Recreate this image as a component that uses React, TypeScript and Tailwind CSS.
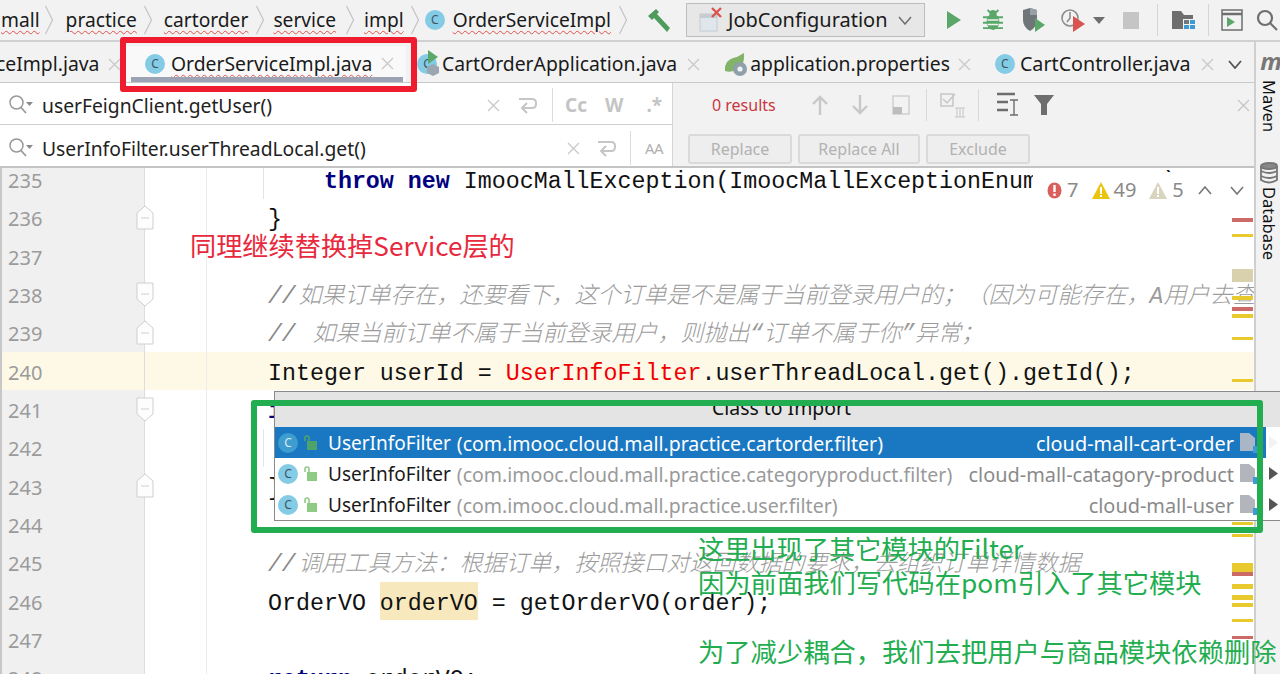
import React from "react";

const UI = "font-['Noto_Sans','Noto_Sans_CJK_SC',sans-serif]";

function Chevron({ className = "" }: { className?: string }) {
  return (
    <svg width="10" height="32" viewBox="0 0 10 32" className={`shrink-0 ${className}`} fill="none" stroke="#c4c4c4" strokeWidth="1.2">
      <path d="M1.5 2 L8.5 16 L1.5 30" />
    </svg>
  );
}

function ClassIcon({ dark = false, size = 20 }: { dark?: boolean; size?: number }) {
  return (
    <span
      className={`flex shrink-0 items-center justify-center rounded-full text-[12px] leading-none ${UI} ${dark ? "bg-[#3f9ccf] text-[#d8eaf5]" : "bg-[#84cbe6] text-[#3e5560]"}`}
      style={{ width: size, height: size }}
    >
      C
    </span>
  );
}

function CloseX({ className = "", color = "#c9c9c9", size = 13 }: { className?: string; color?: string; size?: number }) {
  return (
    <svg width={size} height={size} viewBox="0 0 13 13" className={`shrink-0 ${className}`} fill="none" stroke={color} strokeWidth="1.3">
      <path d="M1 1 L12 12 M12 1 L1 12" />
    </svg>
  );
}

function SearchIcon() {
  return (
    <svg width="26" height="22" viewBox="0 0 26 22" className="shrink-0" fill="none">
      <circle cx="8.5" cy="8.5" r="6.5" stroke="#9a9a9a" strokeWidth="1.5" />
      <path d="M13 13.5 L18 19" stroke="#9a9a9a" strokeWidth="1.8" />
      <path d="M18 8 L25 8 L21.5 12 Z" fill="#8a8a8a" />
    </svg>
  );
}

function EnterIcon({ className = "" }: { className?: string }) {
  return (
    <svg width="19" height="18" viewBox="0 0 19 18" className={`shrink-0 ${className}`} fill="none" stroke="#c6c6c6" strokeWidth="2">
      <path d="M1 3 H14 Q18 3 18 7 V8 Q18 12 14 12 H5" />
      <path d="M9 7 L4 12 L9 17" />
    </svg>
  );
}

function Folder({ light = false }: { light?: boolean }) {
  return (
    <svg width="18" height="22" viewBox="0 0 18 22" className="shrink-0">
      <path d="M0 1 H9 L15 6 V19 H0 Z" fill={light ? "#a9b6c6" : "#b2b6bc"} />
      <rect x="13" y="14" width="5" height="7" fill="#3d9ad6" />
    </svg>
  );
}

function Lock({ dark = false }: { dark?: boolean }) {
  const c = dark ? "#4fa36a" : "#8fcb85";
  return (
    <svg width="13" height="15" viewBox="0 0 13 15" className="shrink-0">
      <rect x="3" y="6" width="10" height="9" fill={c} />
      <path d="M1 6 V3 Q1 1 3 1 Q5 1 5 3 V6" fill="none" stroke={c} strokeWidth="1.6" />
    </svg>
  );
}

function SmallButton({ w, children }: { w: string; children: React.ReactNode }) {
  return (
    <span className={`flex h-[30px] items-center justify-center rounded-[3px] border-2 border-[#dadada] bg-[#eeeeee] text-[16px] text-[#b2b2b2] ${w}`}>
      {children}
    </span>
  );
}

const Kw = ({ children }: { children: React.ReactNode }) => <span className="font-bold text-[#000080]">{children}</span>;
const Cm = ({ children }: { children: React.ReactNode }) => (
  <span className="italic text-[#9c9c9c] font-['Liberation_Mono','Noto_Sans_CJK_SC',monospace] text-[23px] font-light [text-spacing-trim:space-all]">
    <span className="mr-[3px] text-[#888]">//</span>
    {children}
  </span>
);

type Row = { n: number; code?: React.ReactNode; fold?: "up" | "down"; current?: boolean; guide?: boolean };

const rows: Row[] = [
  {
    n: 235,
    guide: true,
    code: (
      <>
        {"    "}
        <Kw>throw</Kw> <Kw>new</Kw> ImoocMallException(ImoocMallExceptionEnum.<span className="italic font-bold text-[#660e7a]">NO_ORDER</span>);
      </>
    ),
  },
  { n: 236, fold: "up", code: "}" },
  { n: 237 },
  { n: 238, fold: "down", code: <Cm>如果订单存在，还要看下，这个订单是不是属于当前登录用户的；（因为可能存在，A用户去查</Cm> },
  { n: 239, fold: "up", code: <Cm> 如果当前订单不属于当前登录用户，则抛出“订单不属于你”异常；</Cm> },
  {
    n: 240,
    current: true,
    code: (
      <>
        Integer userId = <span className="text-[#f00000]">UserInfoFilter</span>.userThreadLocal.get().getId();
      </>
    ),
  },
  { n: 241, fold: "down", code: <Kw>if</Kw> },
  { n: 242, guide: true },
  { n: 243, fold: "up", code: "}" },
  { n: 244 },
  { n: 245, code: <Cm>调用工具方法：根据订单，按照接口对返回数据的要求，去组织订单详情数据</Cm> },
  {
    n: 246,
    code: (
      <>
        OrderVO <span className="bg-[#f7e9bd] pb-[3px] pt-[9px]">orderVO</span> = getOrderVO(order);
      </>
    ),
  },
  { n: 247 },
  {
    n: 248,
    code: (
      <>
        <Kw>return</Kw> orderVO;
      </>
    ),
  },
];

const marks: { top: number; h: number; c: string }[] = [
  { top: 218, h: 4, c: "#cb6a66" },
  { top: 234, h: 3, c: "#e8c92e" },
  { top: 269, h: 13, c: "#d9d0ae" },
  { top: 296, h: 4, c: "#e8c92e" },
  { top: 307, h: 4, c: "#cb6a66" },
  { top: 314, h: 4, c: "#e8c92e" },
  { top: 337, h: 3, c: "#e8c92e" },
  { top: 379, h: 3, c: "#e8c92e" },
  { top: 522, h: 3, c: "#e8c92e" },
  { top: 534, h: 3, c: "#e8c92e" },
  { top: 563, h: 9, c: "#e8c92e" },
  { top: 572, h: 4, c: "#cb6a66" },
  { top: 584, h: 5, c: "#e8c92e" },
  { top: 595, h: 5, c: "#e8c92e" },
  { top: 603, h: 4, c: "#e8c92e" },
  { top: 619, h: 3, c: "#e8c92e" },
  { top: 636, h: 3, c: "#cb6a66" },
];

const imports = [
  { pkg: "(com.imooc.cloud.mall.practice.cartorder.filter)", mod: "cloud-mall-cart-order", sel: true },
  { pkg: "(com.imooc.cloud.mall.practice.categoryproduct.filter)", mod: "cloud-mall-catagory-product", sel: false },
  { pkg: "(com.imooc.cloud.mall.practice.user.filter)", mod: "cloud-mall-user", sel: false },
];

function Crumb({ children, ml }: { children: React.ReactNode; ml: string }) {
  return <span className={`${ml} underline decoration-wavy decoration-[#e2504a] decoration-1 underline-offset-[3px]`}>{children}</span>;
}

export default function App() {
  return (
    <div className={`relative flex h-[674px] w-[1280px] flex-col overflow-hidden bg-[#f2f2f2] text-[#1a1a1a] ${UI}`}>
      {/* navigation bar */}
      <div className="flex h-[42px] shrink-0 items-center border-b-2 border-[#d0d0d0] pl-[1px] text-[19.2px] leading-none *:shrink-0">
        <Crumb ml="ml-0">mall</Crumb>
        <Chevron className="ml-[4px]" />
        <Crumb ml="ml-[12px]">practice</Crumb>
        <Chevron className="ml-[6px]" />
        <Crumb ml="ml-[11px]">cartorder</Crumb>
        <Chevron className="ml-[7px]" />
        <Crumb ml="ml-[8px]">service</Crumb>
        <Chevron className="ml-[9px]" />
        <Crumb ml="ml-[9px]">impl</Crumb>
        <Chevron className="ml-[6px]" />
        <span className="ml-[5px]">
          <ClassIcon />
        </span>
        <Crumb ml="ml-[8px]">OrderServiceImpl</Crumb>
        <Chevron className="ml-[7px]" />
        <svg width="26" height="26" viewBox="0 0 26 26" className="ml-[18px] shrink-0">
          <path d="M2 9 L10 2 L13 5 L11 7 L24 21 L21 25 L8 11 L6 13 Z" fill="#4e9c5d" />
        </svg>
        <div className="ml-[14px] flex h-[34px] w-[239px] items-center border border-[#bdbdbd] bg-[#e7e7e7]">
          <svg width="24" height="26" viewBox="0 0 24 26" className="ml-[12px] shrink-0">
            <rect x="1" y="7" width="17" height="17" fill="#dfe6ec" stroke="#c5ccd2" />
            <rect x="1" y="7" width="17" height="4" fill="#c5ccd2" />
            <path d="M13 1 L22 10 M22 1 L13 10" stroke="#d9534f" strokeWidth="2.4" />
          </svg>
          <span className="ml-[5px] text-[20px]">JobConfiguration</span>
          <svg width="14" height="9" viewBox="0 0 14 9" className="ml-[10px] shrink-0" fill="none" stroke="#6e6e6e" strokeWidth="1.5">
            <path d="M1 1 L7 8 L13 1" />
          </svg>
        </div>
        <svg width="16" height="20" viewBox="0 0 16 20" className="ml-[21px] shrink-0">
          <path d="M1 1 L15 10 L1 19 Z" fill="#5aa869" />
        </svg>
        <svg width="20" height="24" viewBox="0 0 22 24" className="ml-[21px] shrink-0">
          <ellipse cx="11" cy="14" rx="7" ry="9" fill="#5aa869" />
          <circle cx="11" cy="5" r="4" fill="#5aa869" />
          <path d="M5 1 L8 4 M17 1 L14 4 M0 9 H22 M0 15 H22 M0 21 H22" stroke="#5aa869" strokeWidth="2" />
          <path d="M5 12 H17 M5 17 H17" stroke="#f2f2f2" strokeWidth="1.5" />
        </svg>
        <svg width="24" height="26" viewBox="0 0 24 26" className="ml-[19px] shrink-0">
          <path d="M1 3 L8 1 L15 3 V13 Q15 20 8 24 Q1 20 1 13 Z" fill="#70757a" />
          <path d="M8 1 L15 3 V8 H8 Z" fill="#9aa0a5" />
          <path d="M13 11 L23 18 L13 25 Z" fill="#5aa869" />
        </svg>
        <svg width="26" height="26" viewBox="0 0 26 26" className="ml-[14px] shrink-0" fill="none">
          <circle cx="10" cy="11" r="8" stroke="#8d8d8d" strokeWidth="1.6" />
          <path d="M10 5 V11 L7 15" stroke="#8d8d8d" strokeWidth="1.6" />
          <path d="M13 9 L25 17 L13 25 Z" fill="#d9534f" />
        </svg>
        <svg width="12" height="7" viewBox="0 0 12 7" className="ml-[7px] shrink-0">
          <path d="M0 0 H12 L6 7 Z" fill="#6e6e6e" />
        </svg>
        <span className="ml-[18px] h-[17px] w-[16px] shrink-0 bg-[#c5c5c5]" />
        <span className="ml-[18px] h-[32px] w-px shrink-0 bg-[#d6d6d6]" />
        <svg width="24" height="20" viewBox="0 0 24 20" className="ml-[14px] shrink-0">
          <path d="M0 1 H9 L12 5 H21 V19 H0 Z" fill="#6e6e6e" />
          <rect x="11" y="9" width="12" height="10" fill="#f2f2f2" />
          <rect x="12" y="10" width="5" height="4" fill="#6e7780" />
          <rect x="18" y="10" width="5" height="4" fill="#3d9ad6" />
          <rect x="12" y="15" width="5" height="4" fill="#3d9ad6" />
          <rect x="18" y="15" width="5" height="4" fill="#3d9ad6" />
        </svg>
        <span className="ml-[12px] h-[32px] w-px shrink-0 bg-[#d6d6d6]" />
        <svg width="22" height="22" viewBox="0 0 22 22" className="ml-[12px] shrink-0" fill="none">
          <rect x="1" y="1" width="20" height="20" stroke="#6e6e6e" strokeWidth="1.5" />
          <path d="M1 5 H21" stroke="#6e6e6e" strokeWidth="2.5" />
          <path d="M6 8 L14 13 L6 18 Z" fill="#5aa869" />
        </svg>
        <svg width="22" height="22" viewBox="0 0 22 22" className="ml-[13px] shrink-0" fill="none" stroke="#6e6e6e" strokeWidth="2.2">
          <circle cx="9" cy="9" r="7" />
          <path d="M14 14 L21 21" />
        </svg>
      </div>

      <div className="flex min-h-0 flex-1">
        <div className="flex w-[1254px] shrink-0 flex-col">
          {/* tabs */}
          <div className="flex h-[41px] shrink-0 items-center overflow-hidden border-b border-[#c9c9c9] pt-[4px] text-[19.35px] leading-none *:shrink-0">
            <span className="-ml-[4px] w-[103px]">ceImpl.java</span>
            <CloseX className="ml-[9px]" />
            <div className="relative ml-[3px] flex h-[36px] w-[282px] items-center self-end bg-[#f9f9f9] pb-[1px] pl-[21px]">
              <ClassIcon />
              <span className="ml-[6px] underline decoration-wavy decoration-[#e2504a] decoration-1 underline-offset-[3px]">OrderServiceImpl.java</span>
              <CloseX className="ml-[9px]" />
              <span className="absolute bottom-0 left-[7px] h-[5px] w-[272px] bg-[#9ca3b4]" />
            </div>
            <span className="relative ml-[11px]">
              <ClassIcon />
              <svg width="12" height="26" viewBox="0 0 12 26" className="absolute left-[10px] top-[-4px]">
                <path d="M1 0 L11 7 L1 14 Z" fill="#5aa869" />
                <path d="M0 17 L6 14 L12 17 V23 L6 26 L0 23 Z" fill="#9aa7b0" />
              </svg>
            </span>
            <span className="ml-[5px]">CartOrderApplication.java</span>
            <CloseX className="ml-[10px]" />
            <svg width="24" height="24" viewBox="0 0 24 24" className="ml-[24px] shrink-0">
              <path d="M1 19 Q0 7 13 5 L20 1 Q21 15 12 18 Q6 21 1 19 Z" fill="#82b366" />
              <circle cx="16" cy="17" r="7" fill="#8fa0aa" />
              <circle cx="16" cy="17" r="2.6" fill="#eef2f4" />
            </svg>
            <span className="ml-[2px]">application.properties</span>
            <CloseX className="ml-[8px]" />
            <span className="ml-[24px]">
              <ClassIcon />
            </span>
            <span className="ml-[5px] text-[19.7px]">CartController.java</span>
            <CloseX className="ml-[10px]" />
            <svg width="14" height="9" viewBox="0 0 14 9" className="ml-[14px] shrink-0" fill="none" stroke="#555" strokeWidth="1.8">
              <path d="M1 1 L7 8 L13 1" />
            </svg>
          </div>

          {/* find and replace */}
          <div className="flex h-[85px] shrink-0 border-b-2 border-[#c4c4c4]">
            <div className="flex w-[673px] shrink-0 flex-col border-r border-[#d6d6d6] bg-white text-[19.3px] leading-none text-[#222]">
              <div className="flex h-[42px] items-center border-b border-[#cfcfcf] pl-[8px] pt-[4px] *:shrink-0">
                <SearchIcon />
                <span className="ml-[8px] w-[230px] whitespace-nowrap">userFeignClient.getUser()</span>
                <CloseX className="ml-[215px]" />
                <EnterIcon className="ml-[18px]" />
                <span className="ml-[15px] h-[34px] w-px bg-[#dcdcdc]" />
                <span className="ml-[12px] text-[19px] font-bold text-[#c4c4c4]">Cc</span>
                <span className="ml-[18px] text-[19px] font-bold text-[#c4c4c4]">W</span>
                <span className="ml-[23px] text-[19px] font-bold text-[#c4c4c4]">.*</span>
              </div>
              <div className="flex h-[42px] items-center pl-[8px] pt-[6px] *:shrink-0">
                <SearchIcon />
                <span className="ml-[8px] w-[325px] whitespace-nowrap">UserInfoFilter.userThreadLocal.get()</span>
                <CloseX className="ml-[200px]" />
                <EnterIcon className="ml-[17px]" />
                <span className="ml-[14px] h-[34px] w-px bg-[#dcdcdc]" />
                <span className="ml-[14px] text-[15px] tracking-[-0.5px] text-[#b0b0b0]">AA</span>
              </div>
            </div>
            <div className="flex flex-1 flex-col text-[16px] leading-none">
              <div className="flex h-[42px] items-center pt-[2px] *:shrink-0">
                <span className="ml-[39px] text-[#c7373f]">0 results</span>
                <svg width="16" height="20" viewBox="0 0 16 20" className="ml-[36px]" fill="none" stroke="#c8c8c8" strokeWidth="2.4">
                  <path d="M8 20 V2 M1 9 L8 2 L15 9" />
                </svg>
                <svg width="16" height="20" viewBox="0 0 16 20" className="ml-[24px]" fill="none" stroke="#c8c8c8" strokeWidth="2.4">
                  <path d="M8 0 V18 M1 11 L8 18 L15 11" />
                </svg>
                <svg width="18" height="20" viewBox="0 0 18 20" className="ml-[24px]">
                  <rect x="1" y="1" width="16" height="18" fill="none" stroke="#cfcfcf" strokeWidth="1.5" />
                  <rect x="1" y="12" width="9" height="7" fill="#bdbdbd" />
                </svg>
                <span className="ml-[16px] h-[32px] w-px bg-[#d9d9d9]" />
                <svg width="26" height="26" viewBox="0 0 26 26" className="ml-[13px]" fill="none" stroke="#c6c6c6" strokeWidth="1.5">
                  <rect x="1" y="2" width="12" height="12" />
                  <path d="M3 7 L7 11 L15 2" />
                  <path d="M15 16 H25 M15 25 H25 M17 16 V25 M20 16 V25 M23 16 V25" strokeWidth="1" />
                </svg>
                <span className="ml-[12px] h-[32px] w-px bg-[#d9d9d9]" />
                <svg width="22" height="26" viewBox="0 0 22 26" className="ml-[18px]" fill="none" stroke="#6e6e6e">
                  <path d="M0 2 H18 M0 10 H11 M0 18 H11" strokeWidth="2.4" />
                  <path d="M17 8 V23 M13 8 H21 M13 23 H21" strokeWidth="1.4" />
                </svg>
                <svg width="20" height="22" viewBox="0 0 20 22" className="ml-[15px]">
                  <path d="M0 1 H20 L13 10 V21 H7 V10 Z" fill="#6e6e6e" />
                </svg>
                <CloseX className="ml-[183px]" color="#c6c6c6" />
              </div>
              <div className="flex h-[41px] items-center gap-[6px] pl-[15px] pt-[7px]">
                <SmallButton w="w-[104px]">Replace</SmallButton>
                <SmallButton w="w-[122px]">Replace All</SmallButton>
                <SmallButton w="w-[104px]">Exclude</SmallButton>
              </div>
            </div>
          </div>

          {/* editor */}
          <div className="relative min-h-0 flex-1 overflow-hidden bg-white">
            <div className="-mt-[7.5px] font-['Liberation_Mono','Noto_Sans_CJK_SC',monospace] text-[23.3px] leading-none text-[#111]">
              {rows.map((r) => (
                <div key={r.n} className={`relative flex h-[38.33px] items-center ${r.current ? "bg-[#fdf9e6]" : ""}`}>
                  <div className={`flex h-full w-[145px] shrink-0 items-center border-l-2 border-r border-l-[#c8c8c8] border-r-[#dddddd] pl-[6px] pt-[3px] text-[20px] text-[#9b9b9b] ${UI} ${r.current ? "bg-[#fdf9e6]" : "bg-[#f0f0f0]"}`}>
                    {r.n}
                  </div>
                  {r.fold && (
                    <svg width="18" height="26" viewBox="0 0 18 26" className="absolute left-[136px] top-[6px]" fill="#fdfdfd" stroke="#cfcfcf">
                      {r.fold === "up" ? <path d="M1 8 L9 1 L17 8 V24 H1 Z" /> : <path d="M1 2 H17 V18 L9 25 L1 18 Z" />}
                      <path d="M5 13 H13" />
                    </svg>
                  )}
                  <div className="h-full w-[62px] shrink-0 border-r border-[#ececec]" />
                  {r.guide && <span className="absolute left-[263px] top-0 h-full w-px bg-[#e4e4e4]" />}
                  <pre className="ml-[61px] whitespace-pre pt-[6px] font-[inherit]">{r.code}</pre>
                </div>
              ))}
            </div>
          </div>
        </div>

        {/* right tool stripe */}
        <div className="flex flex-1 flex-col items-center overflow-hidden border-l-2 border-[#cfcfcf] bg-[#f2f2f2] pl-[2px] text-[16.5px] leading-none text-[#111]">
          <span className="mt-[7px] ml-[4px] text-[24px] font-bold italic text-[#777]">m</span>
          <span className="mt-[7px] [writing-mode:vertical-rl]">Maven</span>
          <svg width="18" height="22" viewBox="0 0 18 22" className="mt-[30px]" fill="none" stroke="#777" strokeWidth="1.8">
            <ellipse cx="9" cy="4" rx="8" ry="3" fill="#888" />
            <path d="M1 4 V18 Q9 23 17 18 V4 M1 9 Q9 13 17 9 M1 14 Q9 18 17 14" />
          </svg>
          <span className="mt-[3px] [writing-mode:vertical-rl]">Database</span>
        </div>
      </div>

      {/* error stripe */}
      {marks.map((m) => (
        <span key={m.top} className="absolute left-[1232px] w-[21px]" style={{ top: m.top, height: m.h, background: m.c }} />
      ))}

      {/* inspection widget */}
      <div className="absolute left-[1033px] top-[172px] flex h-[36px] w-[221px] items-center bg-white text-[20px] leading-none text-[#8a8a8a] *:shrink-0">
        <svg width="15" height="17" viewBox="0 0 15 17" className="ml-[14px] shrink-0">
          <ellipse cx="7.5" cy="8.5" rx="7" ry="8" fill="#d9605c" />
          <rect x="6.3" y="3" width="2.4" height="7" fill="#fff" />
          <rect x="6.3" y="11.5" width="2.4" height="2.4" fill="#fff" />
        </svg>
        <span className="ml-[5px]">7</span>
        <svg width="18" height="17" viewBox="0 0 18 17" className="ml-[14px] shrink-0">
          <path d="M9 0 L18 17 H0 Z" fill="#eac50f" />
          <rect x="8" y="5" width="2" height="7" fill="#fff" />
          <rect x="8" y="13" width="2" height="2" fill="#fff" />
        </svg>
        <span className="ml-[3px]">49</span>
        <svg width="18" height="17" viewBox="0 0 18 17" className="ml-[13px] shrink-0">
          <path d="M9 0 L18 17 H0 Z" fill="#d9d4bd" />
          <rect x="8" y="5" width="2" height="7" fill="#fff" />
          <rect x="8" y="13" width="2" height="2" fill="#fff" />
        </svg>
        <span className="ml-[5px]">5</span>
        <svg width="14" height="9" viewBox="0 0 14 9" className="ml-[14px] shrink-0" fill="none" stroke="#777" strokeWidth="1.6">
          <path d="M1 8 L7 1 L13 8" />
        </svg>
        <svg width="14" height="9" viewBox="0 0 14 9" className="ml-[18px] shrink-0" fill="none" stroke="#777" strokeWidth="1.6">
          <path d="M1 1 L7 8 L13 1" />
        </svg>
      </div>

      {/* class to import popup */}
      <div className="absolute left-[274px] top-[391px] w-[1006px] border-b border-l border-t border-[#8a8a8a] bg-white text-[19px] leading-none">
        <div className="flex h-[35px] items-center justify-center bg-[#e4e4e4] pb-[4px] pl-[8px] text-[19.4px] text-[#111]">Class to Import</div>
        {imports.map((it) => (
          <div key={it.mod} className="flex h-[31px] items-center">
            <div className={`flex h-full w-[991px] shrink-0 items-center pl-[3px] ${it.sel ? "bg-[#1a78c2] text-white" : "bg-white"}`}>
              <ClassIcon dark={it.sel} />
              <span className="ml-[6px]">
                <Lock dark={it.sel} />
              </span>
              <span className="ml-[11px] pt-[2px]">UserInfoFilter</span>
              <span className={`ml-[6px] pt-[2px] text-[19.5px] ${it.sel ? "text-white" : "text-[#9a9a9a]"}`}>{it.pkg}</span>
              <span className={`ml-auto pt-[2px] text-[19.9px] ${it.sel ? "text-white" : "text-[#8a8a8a]"}`}>{it.mod}</span>
              <span className="ml-[6px] mr-[8px]">
                <Folder light={it.sel} />
              </span>
            </div>
            <svg width="9" height="13" viewBox="0 0 9 13" className="ml-[3px] shrink-0">
              <path d="M0 0 L9 6.5 L0 13 Z" fill={it.sel ? "#f2f2f2" : "#555"} />
            </svg>
          </div>
        ))}
      </div>

      {/* annotations */}
      <div className="absolute left-[120px] top-[37px] h-[55px] w-[297px] rounded-[3px] border-[6px] border-[#ee1c2e]" />
      <div className="absolute left-[251px] top-[400px] h-[133px] w-[1012px] rounded-[3px] border-[6px] border-[#22ad50]" />
      <span className="absolute left-[190px] top-[228px] whitespace-nowrap text-[26.2px] leading-[34px] text-[#e8283c] font-['Noto_Sans_CJK_SC',sans-serif]">同理继续替换掉Service层的</span>
      <span className="absolute left-[698px] top-[531px] whitespace-nowrap text-[26.2px] leading-[34px] text-[#22ad50] font-['Noto_Sans_CJK_SC',sans-serif]">这里出现了其它模块的Filter</span>
      <span className="absolute left-[698px] top-[565px] whitespace-nowrap text-[26.3px] leading-[34px] text-[#22ad50] font-['Noto_Sans_CJK_SC',sans-serif]">因为前面我们写代码在pom引入了其它模块</span>
      <span className="absolute left-[698px] top-[634px] whitespace-nowrap text-[26.3px] leading-[34px] text-[#22ad50] font-['Noto_Sans_CJK_SC',sans-serif]">为了减少耦合，我们去把用户与商品模块依赖删除</span>
    </div>
  );
}
